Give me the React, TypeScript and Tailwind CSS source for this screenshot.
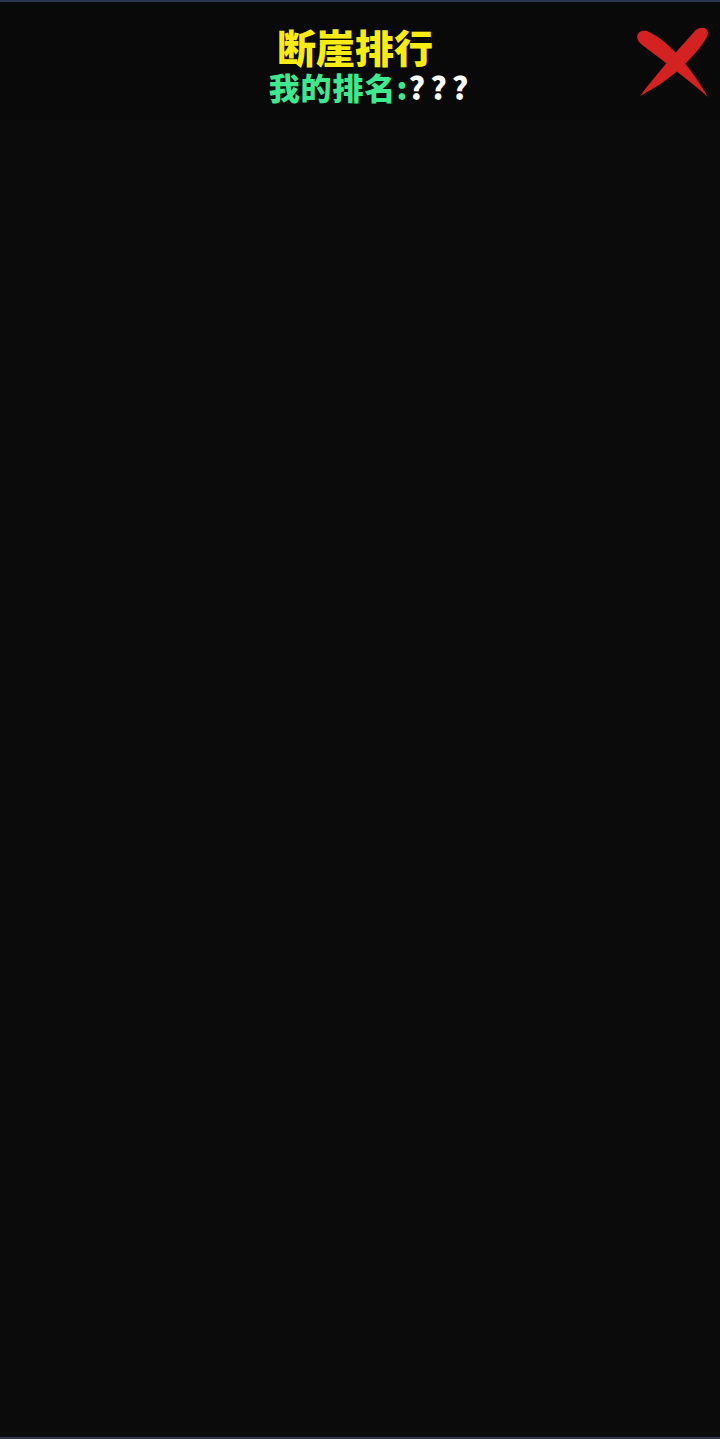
import React from 'react';

const CloseMark: React.FC = () => (
  <svg viewBox="0 0 72 72" className="w-[72px] h-[72px]" fill="#d42222">
    <path d="M72 71 C54 55 26 34 5 18 C-2 12 1 3 11 5 C32 14 54 40 72 71 Z" />
    <path d="M4 70 C22 46 42 24 58 6 C64 -1 75 1 71 11 C57 34 33 55 4 70 Z" />
  </svg>
);

const App: React.FC = () => {
  return (
    <div
      className="w-[720px] h-[1439px] flex flex-col bg-[#0b0b0b] border-t-2 border-b-2 border-[#2a3552]"
      style={{ fontFamily: '"Noto Sans CJK SC", "Noto Sans", sans-serif' }}
    >
      {/* header */}
      <header className="relative h-[118px] bg-[#090909] flex flex-col items-center pt-[24px]">
        <h1 className="text-[39px] leading-[40px] font-black text-[#f8ec12] ml-[-10px]">断崖排行</h1>
        <p className="mt-[3px] text-[31px] leading-[36px] font-black ml-[22px]">
          <span className="text-[#3ee88f] tracking-[1px]">我的排名:</span>
          <span className="text-white tracking-[5px]">???</span>
        </p>
        <button className="absolute right-[12px] top-[24px]">
          <CloseMark />
        </button>
      </header>

      <main className="flex-1" />
    </div>
  );
};

export default App;
